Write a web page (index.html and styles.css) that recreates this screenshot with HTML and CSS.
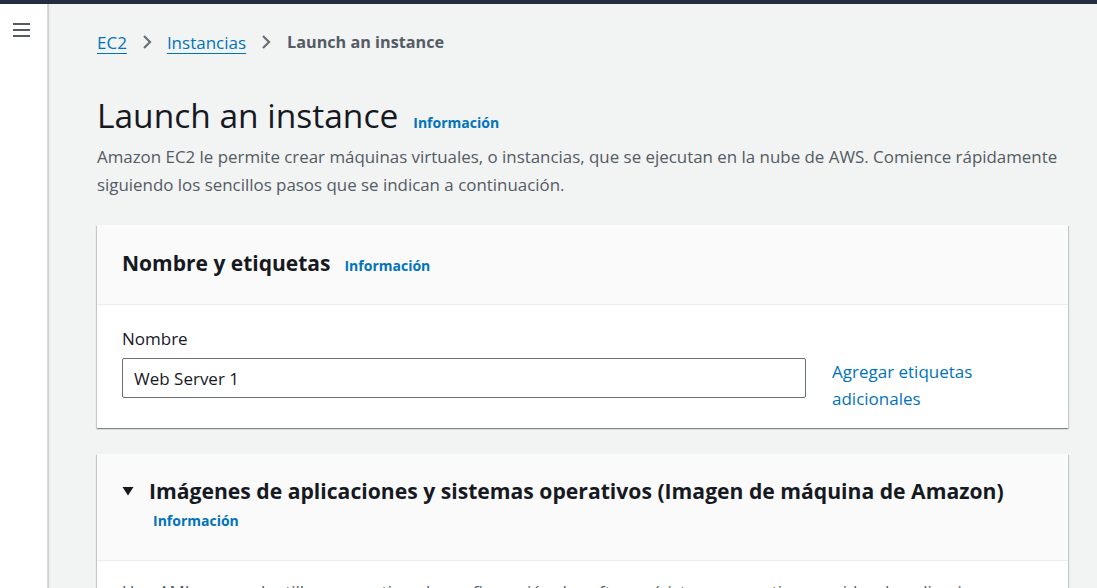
FILE: index.html
```html
<!DOCTYPE html>
<html lang="es">
<head>
<meta charset="utf-8">
<title>Launch an instance</title>
<link rel="stylesheet" href="styles.css">
</head>
<body>
<div class="topbar"></div>
<div class="layout">
  <nav class="sidenav">
    <button class="menu-btn" aria-label="Abrir navegación">
      <svg width="20" height="16" viewBox="0 0 20 16"><path d="M1 2h17M1 8h17M1 14h17" stroke="#545b64" stroke-width="2.2" fill="none"/></svg>
    </button>
  </nav>
  <main class="main">
    <div class="breadcrumbs">
      <a href="#" class="crumb-link">EC2</a>
      <svg class="chev" width="16" height="16" viewBox="0 0 16 16"><path d="M5 2l6 6-6 6" stroke="#687078" stroke-width="2.2" fill="none"/></svg>
      <a href="#" class="crumb-link">Instancias</a>
      <svg class="chev" width="16" height="16" viewBox="0 0 16 16"><path d="M5 2l6 6-6 6" stroke="#687078" stroke-width="2.2" fill="none"/></svg>
      <span class="crumb-current">Launch an instance</span>
    </div>

    <header class="page-header">
      <div class="title-row">
        <h1 class="page-title">Launch an instance</h1>
        <a href="#" class="info-link">Información</a>
      </div>
      <p class="page-desc">Amazon EC2 le permite crear máquinas virtuales, o instancias, que se ejecutan en la nube de AWS. Comience rápidamente siguiendo los sencillos pasos que se indican a continuación.</p>
    </header>

    <section class="card">
      <div class="card-header">
        <h2 class="card-title">Nombre y etiquetas</h2>
        <a href="#" class="info-link">Información</a>
      </div>
      <div class="card-body name-body">
        <div class="field">
          <label class="field-label" for="name">Nombre</label>
          <input id="name" class="text-input" type="text" value="Web Server 1">
        </div>
        <a href="#" class="add-tags">Agregar etiquetas adicionales</a>
      </div>
    </section>

    <section class="card">
      <div class="card-header expand-header">
        <div class="expand-title-row">
          <svg class="caret" width="12" height="12" viewBox="0 0 12 12"><path d="M0.5 2h11L6 10.5z" fill="#16191f"/></svg>
          <h2 class="card-title">Imágenes de aplicaciones y sistemas operativos (Imagen de máquina de Amazon)</h2>
        </div>
        <a href="#" class="info-link sub-info">Información</a>
      </div>
      <div class="card-body ami-body">
        <p class="card-text">Una AMI es una plantilla que contiene la configuración de software (sistema operativo, servidor de aplicaciones y aplicaciones) necesaria para lanzar la instancia.</p>
      </div>
    </section>
  </main>
</div>
</body>
</html>
```

FILE: styles.css
```css
* { box-sizing: border-box; }
html, body { margin: 0; padding: 0; height: 100%; overflow: hidden; }
body {
  font-family: "Open Sans", "Noto Sans", Arial, sans-serif;
  color: #16191f;
  background: #f2f3f3;
}
.topbar { height: 4px; background: #232f3e; }
.layout { display: flex; height: calc(100% - 4px); }
.sidenav {
  width: 48px;
  flex: none;
  background: #fff;
  border-right: 1px solid #d5dbdb;
  box-shadow: 1px 0 1px rgba(0,28,36,.15);
}
.menu-btn {
  margin: 18px 0 0 12px;
  padding: 0;
  border: 0;
  background: none;
  display: block;
}
.main {
  flex: 1;
  padding: 20px 29px 0 49px;
  overflow: hidden;
}
.breadcrumbs {
  display: flex;
  align-items: center;
  gap: 12px;
  height: 36px;
  font-size: 17px;
}
.crumb-link { color: #0073bb; text-decoration: underline; text-underline-offset: 4px; }
.crumb-current { color: #545b64; font-weight: 700; font-size: 16.2px; margin-left: 1px; }
.page-header { padding-top: 33px; }
.title-row { display: flex; align-items: baseline; gap: 15px; }
.page-title {
  margin: 0;
  font-size: 33.5px;
  font-weight: 400;
  line-height: 44px;
}
.info-link {
  color: #0073bb;
  font-size: 14px;
  font-weight: 700;
  text-decoration: none;
}
.page-desc {
  margin: 6px 0 0;
  color: #545b64;
  font-size: 16.9px;
  line-height: 28px;
}
.card {
  background: #fff;
  margin-top: 26px;
  box-shadow: 0 1px 1px 0 rgba(0,28,36,.3), 1px 1px 1px 0 rgba(0,28,36,.15), -1px 1px 1px 0 rgba(0,28,36,.15);
}
.card-header {
  background: #fafafa;
  border-bottom: 1px solid #eaeded;
  padding: 21px 25px 24px;
  display: flex;
  align-items: baseline;
  gap: 14px;
}
.card-title { margin: 0; font-size: 21px; font-weight: 700; line-height: 34px; }
.card-body { padding: 22px 25px; }
.name-body { display: flex; align-items: flex-start; gap: 26px; padding-bottom: 16px; }
.field { width: 684px; flex: none; }
.field-label { display: block; font-size: 17px; line-height: 24px; margin-bottom: 7px; }
.text-input {
  display: block;
  width: 100%;
  height: 40px;
  border: 1px solid #687078;
  border-radius: 2px;
  padding: 0 11px;
  font: inherit;
  font-size: 17px;
  color: #16191f;
  background: #fff;
}
.add-tags {
  color: #0073bb;
  text-decoration: none;
  font-size: 17px;
  line-height: 27px;
  width: 160px;
  margin-top: 31px;
}
.expand-header { flex-direction: column; align-items: flex-start; gap: 0; padding: 20px 25px 26px; }
.expand-header .card-title { font-size: 21.15px; }
.expand-title-row { display: flex; align-items: center; gap: 15px; }
.sub-info { margin-left: 31px; line-height: 26px; }
.ami-body { padding-top: 19px; }
.card-text { margin: 0; color: #545b64; font-size: 17px; line-height: 24px; }
```
